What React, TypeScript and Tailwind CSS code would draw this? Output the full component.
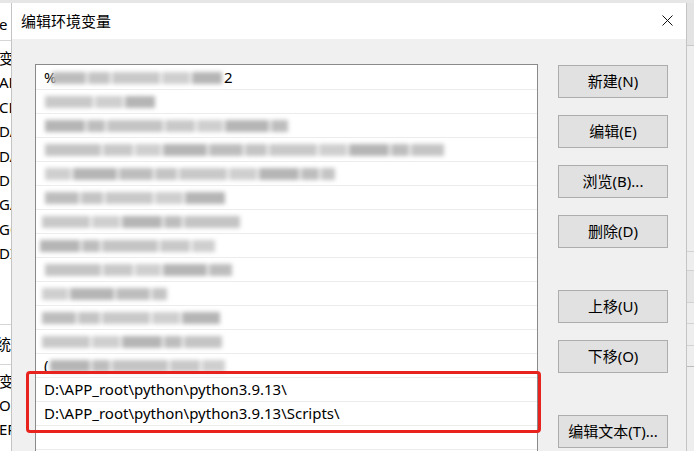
const FONT = "font-['Noto_Sans','Noto_Sans_CJK_SC',sans-serif]";

// blurred PATH entries: lead / tail glyphs + where the smear starts and ends (page x)
const BLUR_ROWS: { lead?: string; tail?: string; from: number; to: number }[] = [
  { lead: "%", from: 52, to: 222, tail: "2" },
  { from: 45, to: 155 },
  { from: 45, to: 288 },
  { from: 45, to: 444 },
  { from: 45, to: 335 },
  { from: 45, to: 227 },
  { from: 42, to: 242 },
  { from: 40, to: 215 },
  { from: 45, to: 232 },
  { from: 42, to: 167 },
  { from: 42, to: 220 },
  { from: 42, to: 222 },
  { lead: "(", from: 50, to: 225 },
];

const PYTHON_ROWS = [
  "D:\\APP_root\\python\\python3.9.13\\",
  "D:\\APP_root\\python\\python3.9.13\\Scripts\\",
];

const PATTERN = [34, 22, 48, 28, 40, 18, 56, 30, 26, 44];
const SHADES = ["#bdbdbd", "#c9c9c9", "#b5b5b5", "#c4c4c4", "#cfcfcf"];

const BUTTONS = [
  { label: "新建(N)", gap: "mt-0" },
  { label: "编辑(E)", gap: "mt-[17px]" },
  { label: "浏览(B)...", gap: "mt-[17px]" },
  { label: "删除(D)", gap: "mt-[17px]" },
  { label: "上移(U)", gap: "mt-[42px]" },
  { label: "下移(O)", gap: "mt-[17px]" },
  { label: "编辑文本(T)...", gap: "mt-[42px]" },
];

const LEFT_ROWS = ["变量", "AP", "CL", "DA", "DA", "DE", "GA", "GC", "DI"];
const LEFT_LOWER = ["变量", "Or", "EP", ".."];

function chunks(total: number, seed: number) {
  const out: { w: number; c: string }[] = [];
  let used = 0;
  let i = seed;
  while (used < total) {
    const w = Math.min(PATTERN[i % PATTERN.length], total - used);
    out.push({ w, c: SHADES[(i * 3) % SHADES.length] });
    used += w + 2;
    i++;
  }
  return out;
}

function BlurRow({ row, idx }: { row: (typeof BLUR_ROWS)[number]; idx: number }) {
  const start = row.lead ? 52 : 36;
  return (
    <div className="h-6 border-b border-[#ececec] flex items-center text-[15px] text-black">
      {row.lead && <span className="w-[16px] pl-2 shrink-0 leading-none">{row.lead}</span>}
      <div className="flex gap-[2px] blur-[2px]" style={{ marginLeft: row.from - start }}>
        {chunks(row.to - row.from, idx * 2).map((c, i) => (
          <div key={i} className="h-[12px]" style={{ width: c.w, backgroundColor: c.c }} />
        ))}
      </div>
      {row.tail && <span className="ml-[2px] leading-none">{row.tail}</span>}
    </div>
  );
}

function LeftStrip() {
  return (
    <div className="w-[11px] shrink-0 overflow-hidden bg-white text-[15px] text-black whitespace-nowrap">
      <div className="h-[38px] border-b border-[#d6d6d6] pt-[5px] flex items-center">
        <span className="-ml-px">e 的</span>
      </div>
      <div className="mt-[5px]">
        {LEFT_ROWS.map((t, i) => (
          <div key={i} className="h-[24.4px] flex items-center">
            <span className="-ml-px">{t}</span>
          </div>
        ))}
      </div>
      <div className="h-[59px] border-b border-[#d6d6d6]" />
      <div className="h-[40px] border-b border-[#d6d6d6] flex items-center">
        <span className="-ml-[4px]">统变</span>
      </div>
      <div className="mt-[5px]">
        {LEFT_LOWER.map((t, i) => (
          <div key={i} className="h-6 flex items-center">
            <span className="-ml-px">{t}</span>
          </div>
        ))}
      </div>
    </div>
  );
}

function RightStrip() {
  return (
    <div className="w-[7px] shrink-0 bg-[#eeeeee] flex flex-col">
      <div className="h-[43px] bg-[#e3e3e3] border-b border-[#c9c9c9]" />
      <div className="h-[206px] border-b border-[#d2d2d2]" />
      <div className="h-[19px] border-b border-[#d2d2d2]" />
      <div className="h-[32px] border-b border-[#d2d2d2] bg-[#e6e6e6]" />
      <div className="h-[21px] border-b border-[#d2d2d2]" />
      <div className="h-[22px] border-b border-[#d2d2d2]" />
      <div className="h-[21px] border-b border-[#bcbcbc]" />
    </div>
  );
}

export default function App() {
  return (
    <div className={`w-[694px] h-[451px] overflow-hidden bg-[#e6e6e6] flex flex-col ${FONT}`}>
      <div className="h-[3px] shrink-0" />
      <div className="flex flex-1 min-h-0">
        <LeftStrip />

        {/* dialog */}
        <div className="w-[676px] shrink-0 flex flex-col border-x border-[#c4c4c4]">
          <div className="h-[36px] shrink-0 bg-white flex items-center justify-between pl-[9px] pr-[13px]">
            <span className="text-[15px] text-black leading-none">编辑环境变量</span>
            <svg width="11" height="11" viewBox="0 0 11 11" className="mt-[-1px]">
              <path d="M0.5 0.5 L10.5 10.5 M10.5 0.5 L0.5 10.5" stroke="#111" strokeWidth="1" fill="none" />
            </svg>
          </div>

          <div className="flex-1 bg-[#f0f0f0] flex items-start pt-[25px] pl-[23px]">
            {/* path list */}
            <div className="relative w-[503px] shrink-0 bg-white border border-[#8a8a8a] pt-px">
              {BLUR_ROWS.map((r, i) => (
                <BlurRow key={i} row={r} idx={i} />
              ))}
              {PYTHON_ROWS.map((p) => (
                <div key={p} className="h-6 border-b border-[#ececec] flex items-center pl-2 text-[15px] text-black">
                  {p}
                </div>
              ))}
              <div className="h-6 border-b border-[#ececec]" />
              <div className="h-6 border-b border-[#ececec]" />

              {/* annotation box */}
              <div className="absolute left-[-10px] top-[306px] w-[515px] h-[62px] border-[3px] border-[#e8231e] rounded-[4px]" />
            </div>

            {/* buttons */}
            <div className="ml-[20px] mt-px flex flex-col">
              {BUTTONS.map((b) => (
                <div
                  key={b.label}
                  className={`${b.gap} w-[110px] h-[33px] bg-[#e1e1e1] border border-[#adadad] flex items-center justify-center text-[15px] text-black`}
                >
                  {b.label}
                </div>
              ))}
            </div>
          </div>
        </div>

        <RightStrip />
      </div>
    </div>
  );
}
